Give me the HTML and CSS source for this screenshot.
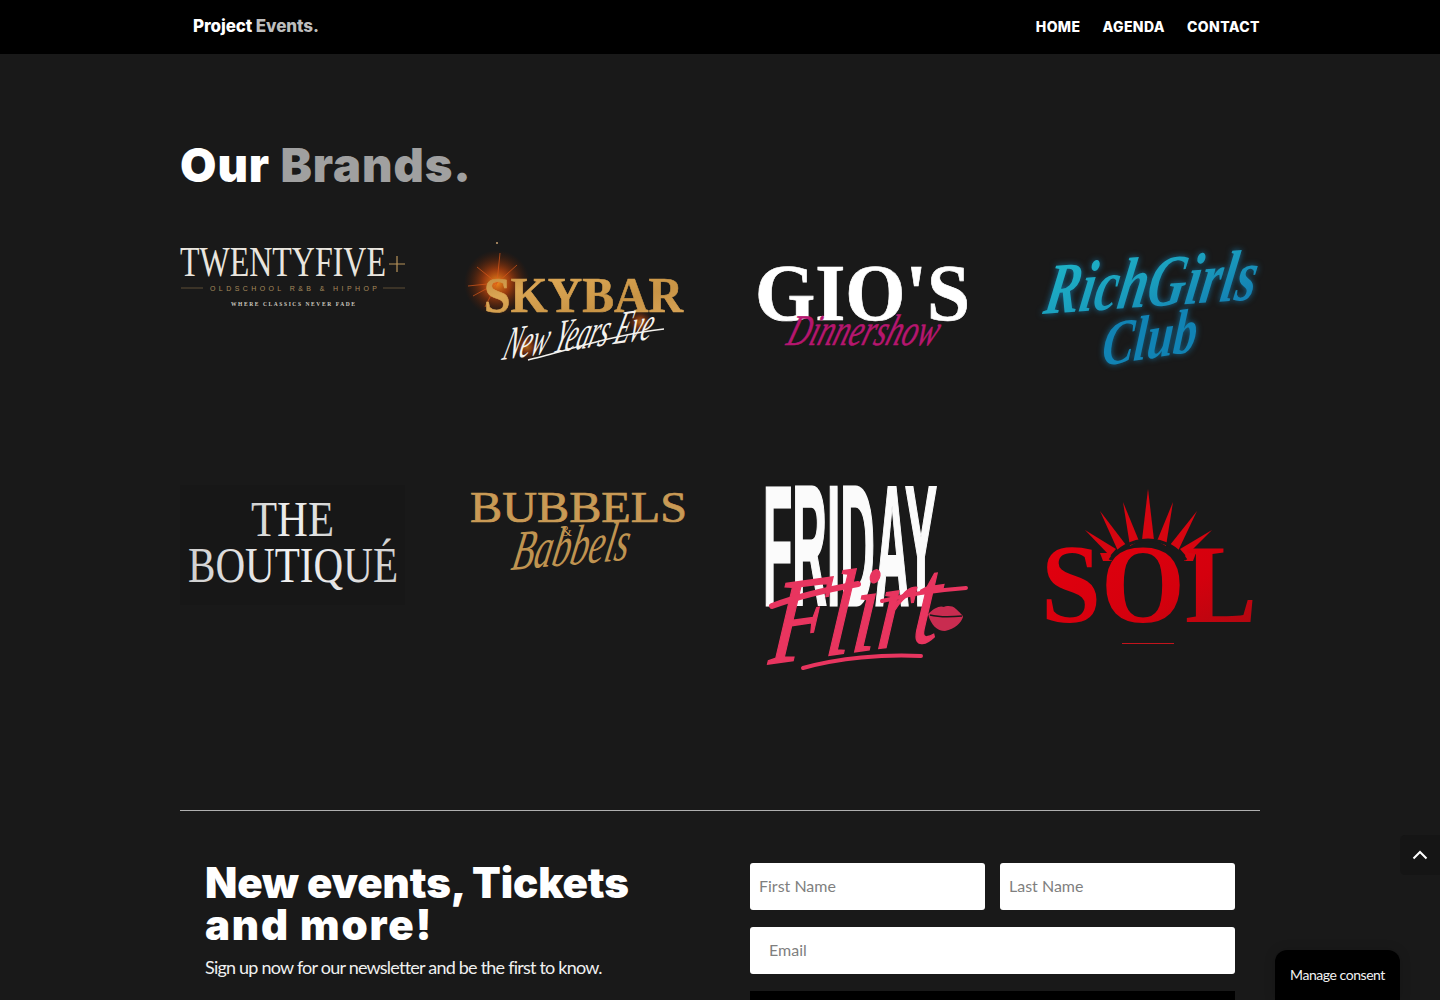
FILE: index.html
```html
<!DOCTYPE html>
<html lang="en">
<head>
<meta charset="utf-8">
<title>Project Events</title>
<link rel="stylesheet" href="styles.css">
</head>
<body>
<div class="page">
  <header class="topbar">
    <div class="topbar-inner">
      <a class="brand" href="#">Project <span class="muted-light">Events.</span></a>
      <nav class="nav">
        <a href="#">HOME</a>
        <a href="#">AGENDA</a>
        <a href="#">CONTACT</a>
      </nav>
    </div>
  </header>

  <main class="container">
    <h2 class="title">Our <span class="muted">Brands.</span></h2>

    <section class="brands">
      <svg class="logo" viewBox="180 230 225 240">
        <defs>
          <linearGradient id="gold" x1="0" x2="1" y1="0" y2="1">
            <stop offset="0" stop-color="#b98238"/><stop offset=".3" stop-color="#dba654"/><stop offset=".65" stop-color="#c99445"/><stop offset="1" stop-color="#dca75a"/>
          </linearGradient>
          <radialGradient id="fire">
            <stop offset="0" stop-color="#f08a1c"/><stop offset=".4" stop-color="#b8430c" stop-opacity=".8"/><stop offset="1" stop-color="#5a1c00" stop-opacity="0"/>
          </radialGradient>
          <linearGradient id="teal" x1="0" x2="1" y1="0" y2="1">
            <stop offset="0" stop-color="#1fb8c9"/><stop offset=".5" stop-color="#1a9dbd"/><stop offset="1" stop-color="#1277b0"/>
          </linearGradient>
          <linearGradient id="red" x1="0" x2="1" y1="0" y2="1">
            <stop offset="0" stop-color="#e6000f"/><stop offset=".6" stop-color="#d4000d"/><stop offset="1" stop-color="#a80a12"/>
          </linearGradient>
          <linearGradient id="silver" x1="0" x2="1" y1="0" y2="0">
            <stop offset="0" stop-color="#cfcfcf"/><stop offset=".5" stop-color="#f2f2f2"/><stop offset="1" stop-color="#d0d0d0"/>
          </linearGradient>
        </defs>
        <text class="serif tf-main" x="180" y="276" textLength="206" lengthAdjust="spacingAndGlyphs">TWENTYFIVE</text>
        <path class="tf-plus" d="M389 264h16M397 256v16"/>
        <path class="tf-rule" d="M181 288h22M383 288h22"/>
        <text class="sans tf-sub" x="210" y="291" textLength="167">OLDSCHOOL R&amp;B &amp; HIPHOP</text>
        <text class="serif tf-tag" x="231" y="306" textLength="124">WHERE CLASSICS NEVER FADE</text>
      </svg>

      <svg class="logo" viewBox="465 230 225 240">
        <circle cx="497" cy="283" r="33" fill="url(#fire)"/>
        <circle class="ember" cx="527" cy="347" r="14" fill="url(#fire)"/>
        <circle class="ember" cx="640" cy="322" r="13" fill="url(#fire)"/>
        <path class="spark" d="M497 283l-20-16M497 283l-29 3M497 283l-12 24M497 283l3-30M497 283l20-18M497 283l-24 13"/>
        <circle class="spark-dot" cx="497" cy="243" r="1"/>
        <text class="serif sky-main" x="484" y="312" textLength="199" lengthAdjust="spacingAndGlyphs">SKYBAR</text>
        <text class="serif sky-script" transform="translate(501 360) rotate(-8) skewX(-24)" textLength="150" lengthAdjust="spacingAndGlyphs">New Years Eve</text>
        <path class="sky-swoosh" d="M528 360c34-8 88-26 136-31"/>
      </svg>

      <svg class="logo" viewBox="750 230 225 240">
        <text class="serif gio-main" x="755" y="320" textLength="215" lengthAdjust="spacingAndGlyphs">GIO'S</text>
        <text class="serif gio-script" transform="translate(785 345) skewX(-18)" textLength="150" lengthAdjust="spacingAndGlyphs">Dinnershow</text>
      </svg>

      <svg class="logo" viewBox="1035 230 225 240">
        <g class="rich-glow">
          <text class="serif rich-a" transform="translate(1042 314) rotate(-4) skewX(-14)" textLength="212" lengthAdjust="spacingAndGlyphs">RichGirls</text>
          <text class="serif rich-b" transform="translate(1101 366) rotate(-9) skewX(-14)" textLength="96" lengthAdjust="spacingAndGlyphs">Club</text>
        </g>
      </svg>

      <svg class="logo" viewBox="180 470 225 240">
        <rect class="bq-box" x="180" y="485" width="225" height="120"/>
        <text class="serif bq-main" x="251" y="536" textLength="83" lengthAdjust="spacingAndGlyphs">THE</text>
        <text class="serif bq-main" x="188" y="582" textLength="210" lengthAdjust="spacingAndGlyphs">BOUTIQUÉ</text>
      </svg>

      <svg class="logo" viewBox="465 470 225 240">
        <text class="serif bb-main" x="470" y="522" textLength="217" lengthAdjust="spacingAndGlyphs">BUBBELS</text>
        <text class="serif bb-amp" x="561" y="536">&amp;</text>
        <text class="serif bb-script" transform="translate(510 570) rotate(-5) skewX(-16)" textLength="117" lengthAdjust="spacingAndGlyphs">Babbels</text>
      </svg>

      <svg class="logo" viewBox="750 470 225 240">
        <text class="sans fr-main" x="763" y="605" textLength="174" lengthAdjust="spacingAndGlyphs">FRIDAY</text>
        <text class="serif fr-script" transform="translate(768 664) rotate(-8) skewX(-14)" textLength="170" lengthAdjust="spacingAndGlyphs">Flirt</text>
        <path class="fr-stroke" d="M772 606c24-9 58-17 86-22"/>
        <path class="fr-stroke fr-bar" d="M882 601c24-6 54-11 84-13"/>
        <path class="fr-stroke fr-bar" d="M803 668c36-10 80-14 118-12"/>
        <path class="fr-lips" d="M928 614c6-6 12-9 16-7 2-1 8-2 12 2 3 3 7 6 7 8-2 6-8 12-18 14-8 0-14-6-17-17z"/>
        <path class="fr-lips-line" d="M930 615c8 2 22 2 32 1"/>
      </svg>

      <svg class="logo" viewBox="1035 470 225 240">
        <g class="sol-red">
          <polygon points="1148,489 1142,540 1154,540"/>
          <polygon points="1123,502 1130,546 1139,541"/>
          <polygon points="1173,502 1166,546 1157,541"/>
          <polygon points="1100,511 1118,551 1126,545"/>
          <polygon points="1197,511 1178,551 1170,545"/>
          <polygon points="1085,530 1110,556 1116,549"/>
          <polygon points="1212,530 1186,556 1180,549"/>
          <polygon points="1100,553 1110,553 1112,561 1103,561"/>
          <polygon points="1196,553 1186,553 1184,561 1193,561"/>
        </g>
        <path class="sol-arc" d="M1110 560a46 46 0 0 1 76 0"/>
        <text class="serif sol-main" x="1041" y="622" textLength="216" lengthAdjust="spacingAndGlyphs">SOL</text>
        <path class="sol-rule" d="M1122 643.500h52"/>
      </svg>
    </section>

    <hr class="divider">

    <section class="signup">
      <div class="signup-copy">
        <h3 class="signup-title">New events, Tickets <span class="signup-title-wide">and more!</span></h3>
        <p class="signup-text">Sign up now for our newsletter and be the first to know.</p>
      </div>
      <form class="signup-form">
        <div class="field-row">
          <input class="field" type="text" placeholder="First Name">
          <input class="field" type="text" placeholder="Last Name">
        </div>
        <input class="field field-wide" type="email" placeholder="Email">
        <div class="submit"></div>
      </form>
    </section>
  </main>

  <a class="to-top" href="#" aria-label="Back to top">
    <svg class="to-top-icon" viewBox="0 0 16 10"><path d="M1.500 8.500L8 2l6.500 6.500"/></svg>
  </a>
  <div class="consent">Manage consent</div>
</div>
</body>
</html>
```

FILE: styles.css
```css
* { box-sizing: border-box; }
html, body { margin: 0; padding: 0; background: #191919; }
.page { height: 1000px; overflow: hidden; position: relative; background: #191919; color: #fff; font-family: "Lato", sans-serif; }
a { color: inherit; text-decoration: none; }

.topbar { height: 54px; background: #000; }
.topbar-inner { width: 1080px; height: 100%; margin: 0 auto; display: flex; align-items: center; justify-content: space-between; }
.brand { margin-left: 13px; margin-top: -2px; font-family: "Inter", sans-serif; font-weight: 800; font-size: 17px; letter-spacing: -0.1px; color: #fff; }
.muted-light { color: #bdbdbd; }
.nav { display: flex; gap: 22px; margin-top: -1px; font-family: "Inter", sans-serif; font-weight: 800; font-size: 14px; letter-spacing: 0.4px; }

.container { width: 1080px; margin: 0 auto; }
.title { margin: 0; padding-top: 83px; height: 176px; font-family: "Inter", sans-serif; font-weight: 900; font-size: 47px; line-height: 56px; letter-spacing: 0.95px; color: #fff; }
.muted { color: #a0a0a0; }

.brands { display: grid; grid-template-columns: repeat(4, 225px); grid-auto-rows: 240px; column-gap: 60px; }
.logo { display: block; width: 225px; height: 240px; overflow: visible; }

.serif { font-family: "Liberation Serif", serif; }
.sans { font-family: "Liberation Sans", sans-serif; }

.tf-main { font-size: 42px; fill: #e9e5de; }
.tf-plus { stroke: #b8935a; stroke-width: 1.200; fill: none; }
.tf-rule { stroke: #5e4f37; stroke-width: 1; fill: none; }
.tf-sub { font-size: 7px; fill: #a68a5c; }
.tf-tag { font-size: 5.500px; font-weight: 700; fill: #cfcac0; }

.spark { stroke: #d9581a; stroke-width: 1; fill: none; opacity: .7; }
.spark-dot { fill: #c9a070; }
.ember { opacity: .7; }
.sky-main { font-size: 50px; font-weight: 700; fill: url(#gold); stroke: url(#gold); stroke-width: .6; }
.sky-script { font-size: 46px; font-style: italic; fill: #f4f2ee; }
.sky-swoosh { stroke: #f4f2ee; stroke-width: 1.400; fill: none; }

.gio-main { font-size: 81px; font-weight: 700; fill: #fff; stroke: #fff; stroke-width: .7; }
.gio-script { font-size: 44px; font-style: italic; fill: #b6166f; stroke: #b6166f; stroke-width: .5; }

.rich-glow { filter: drop-shadow(0 0 3px rgba(20, 140, 200, .7)); }
.rich-a { font-size: 72px; font-style: italic; font-weight: 700; fill: url(#teal); }
.rich-b { font-size: 62px; font-style: italic; font-weight: 700; fill: #1183b4; }

.bq-box { fill: #171717; }
.bq-main { font-size: 50px; fill: url(#silver); }

.bb-main { font-size: 44px; fill: #c99a55; stroke: #c99a55; stroke-width: .7; }
.bb-amp { font-size: 14px; fill: #c99a55; }
.bb-script { font-size: 56px; font-style: italic; fill: #bf9350; }

.fr-main { font-size: 170px; font-weight: 700; fill: #fbfbfb; stroke: #fbfbfb; stroke-width: 3; }
.fr-script { font-size: 118px; font-style: italic; fill: #e8355f; stroke: #e8355f; stroke-width: 1.500; }
.fr-stroke { stroke: #e8355f; stroke-width: 6; stroke-linecap: round; fill: none; }
.fr-bar { stroke-width: 4; }
.fr-lips { fill: #c92c50; }
.fr-lips-line { stroke: #191919; stroke-width: 1.500; fill: none; }

.sol-red polygon { fill: #d60510; }
.sol-arc { stroke: #191919; stroke-width: 3; fill: none; }
.sol-main { font-size: 113px; font-weight: 700; fill: url(#red); }
.sol-rule { stroke: #c2141c; stroke-width: 1; fill: none; }

.divider { margin: 100px 0 0; border: 0; height: 1px; background: #b0b0b0; }

.signup { display: flex; padding: 52px 25px 0; }
.signup-copy { width: 545px; margin-top: -1px; }
.signup-title { margin: 0; width: 440px; font-family: "Inter", sans-serif; font-weight: 900; font-size: 42px; line-height: 42px; letter-spacing: -0.15px; color: #fff; }
.signup-title-wide { letter-spacing: 1.800px; }
.signup-text { margin: 8px 0 0; font-size: 18px; line-height: 26px; letter-spacing: -0.78px; color: #f0f0f0; }

.signup-form { width: 485px; display: flex; flex-direction: column; gap: 17px; }
.field-row { display: flex; gap: 15px; }
.field { display: block; width: 235px; height: 47px; padding: 0 9px 2px; border: 0; border-radius: 3px; background: #fff; font-family: "Lato", sans-serif; font-size: 16px; color: #333; outline: 0; }
.field::placeholder { color: #7f7f7f; opacity: 1; }
.field-wide { width: 485px; padding: 0 19px 2px; }
.submit { height: 47px; background: #000; }

.to-top { position: absolute; right: 0; top: 835px; width: 40px; height: 40px; display: flex; align-items: center; justify-content: center; background: #151515; border-radius: 5px 0 0 5px; }
.to-top-icon { width: 16px; height: 10px; fill: none; stroke: #fff; stroke-width: 2; }
.consent { position: absolute; left: 1275px; top: 950px; width: 125px; height: 50px; padding-top: 16px; text-align: center; background: #000; border-radius: 12px 12px 0 0; font-size: 14px; line-height: 18px; letter-spacing: -0.45px; color: #f2f2f2; box-shadow: 0 0 12px rgba(0,0,0,.15); }
```
